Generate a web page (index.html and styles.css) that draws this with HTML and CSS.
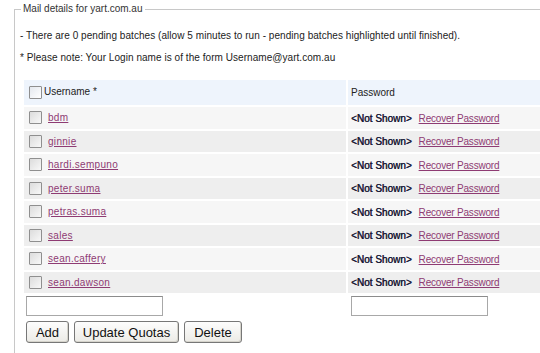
FILE: index.html
```html
<!DOCTYPE html>
<html lang="en">
<head>
    <meta charset="UTF-8">
    <title>Mail details</title>
    <link rel="stylesheet" href="styles.css">
</head>
<body>
    <fieldset class="mail-box">
        <legend>Mail details for yart.com.au</legend>
        <p class="note">- There are 0 pending batches (allow 5 minutes to run - pending batches highlighted until finished).</p>
        <p class="note">* Please note: Your Login name is of the form Username@yart.com.au</p>

        <table class="users">
            <tr class="head">
                <td class="col-user"><input type="checkbox" class="check"><span>Username *</span></td>
                <td class="col-pass">Password</td>
            </tr>
            <tr class="odd">
                <td><input type="checkbox" class="check"><a href="#">bdm</a></td>
                <td><b>&lt;Not Shown&gt;</b><a href="#">Recover Password</a></td>
            </tr>
            <tr class="even">
                <td><input type="checkbox" class="check"><a href="#">ginnie</a></td>
                <td><b>&lt;Not Shown&gt;</b><a href="#">Recover Password</a></td>
            </tr>
            <tr class="odd">
                <td><input type="checkbox" class="check"><a href="#">hardi.sempuno</a></td>
                <td><b>&lt;Not Shown&gt;</b><a href="#">Recover Password</a></td>
            </tr>
            <tr class="even">
                <td><input type="checkbox" class="check"><a href="#">peter.suma</a></td>
                <td><b>&lt;Not Shown&gt;</b><a href="#">Recover Password</a></td>
            </tr>
            <tr class="odd">
                <td><input type="checkbox" class="check"><a href="#">petras.suma</a></td>
                <td><b>&lt;Not Shown&gt;</b><a href="#">Recover Password</a></td>
            </tr>
            <tr class="even">
                <td><input type="checkbox" class="check"><a href="#">sales</a></td>
                <td><b>&lt;Not Shown&gt;</b><a href="#">Recover Password</a></td>
            </tr>
            <tr class="odd">
                <td><input type="checkbox" class="check"><a href="#">sean.caffery</a></td>
                <td><b>&lt;Not Shown&gt;</b><a href="#">Recover Password</a></td>
            </tr>
            <tr class="even">
                <td><input type="checkbox" class="check"><a href="#">sean.dawson</a></td>
                <td><b>&lt;Not Shown&gt;</b><a href="#">Recover Password</a></td>
            </tr>
            <tr class="new-row">
                <td><input type="text" class="text-input"></td>
                <td><input type="text" class="text-input"></td>
            </tr>
        </table>

        <div class="buttons">
            <button class="btn btn-add">Add</button>
            <button class="btn btn-quota">Update Quotas</button>
            <button class="btn btn-delete">Delete</button>
        </div>
    </fieldset>
</body>
</html>
```

FILE: styles.css
```css
* {
    box-sizing: border-box;
}

html, body {
    margin: 0;
    padding: 0;
    overflow: hidden;
}

body {
    font-family: 'Liberation Sans', Arial, sans-serif;
    font-size: 10px;
    color: #222;
    background-color: #fff;
    width: 540px;
    height: 353px;
}

.mail-box {
    margin: 3px 0 0 14px;
    padding: 0 0 0 6px;
    width: 620px;
    border: 1px solid #c8c8c8;
    border-right: none;
    height: 400px;
}

.mail-box legend {
    padding: 0 2px;
    color: #333;
    line-height: 12px;
}

.note {
    margin: 0 0 0 -1px;
    line-height: 12px;
    color: #222;
    letter-spacing: 0.05px;
}

.note:first-of-type {
    margin-top: 15px;
}

.note + .note {
    margin-top: 10px;
}

.users {
    margin: 14px 0 0 3px;
    border-collapse: separate;
    border-spacing: 0 2px;
    width: 600px;
}

.users td {
    padding: 0;
    vertical-align: middle;
    height: 21.5px;
}

.col-user {
    width: 324px;
}

.users tr td:first-child {
    border-right: 2px solid #fff;
}

.head td {
    height: 25px;
    background-color: #eef4fc;
    font-size: 10px;
    color: #222;
}

.head .col-pass {
    padding-left: 3px;
}

.odd td {
    background-color: #f6f6f6;
}

.even td {
    background-color: #eeeeee;
}

.check {
    width: 13px;
    height: 13px;
    margin: 0 5px 0 5px;
    vertical-align: middle;
    appearance: none;
    border: 1px solid #8f8f8f;
    border-radius: 1px;
    background: linear-gradient(135deg, #dcdcdc, #f8f8f8);
}

.head .check {
    margin-right: 2px;
    background: linear-gradient(135deg, #e4e8ee, #ffffff);
}

.users a {
    color: #8e3b73;
    text-decoration: underline;
    letter-spacing: 0.3px;
    vertical-align: middle;
}

.users td:first-child a {
    margin-left: 1px;
}

.users td:last-child a {
    letter-spacing: -0.2px;
}

.users b {
    font-weight: normal;
    font-size: 10px;
    color: #1a1a36;
    text-shadow: 0.4px 0 0 #1a1a36;
    margin: 0 7px 0 3px;
    vertical-align: middle;
}

.new-row td {
    height: 22px;
    background: none;
}

.new-row td:first-child .text-input {
    margin-left: 2px;
}

.new-row td:last-child .text-input {
    margin-left: 3px;
}

.text-input {
    width: 137px;
    height: 20px;
    border: 1px solid #a8a8a8;
    border-top-color: #8c8c8c;
    background: #fff;
    vertical-align: middle;
}

.buttons {
    display: flex;
    gap: 5px;
    margin: 2px 0 0 5px;
}

.btn {
    font-family: 'Liberation Sans', Arial, sans-serif;
    font-size: 13px;
    height: 22px;
    padding: 0 6px;
    color: #111;
    border: 1px solid #777;
    border-radius: 3px;
    background: linear-gradient(#fdfdfd, #ecebe6);
    box-shadow: inset -1px -1px 0 #d6d4cc;
}

.btn-add {
    width: 43px;
}

.btn-quota {
    width: 105px;
}

.btn-delete {
    width: 58px;
}
```
